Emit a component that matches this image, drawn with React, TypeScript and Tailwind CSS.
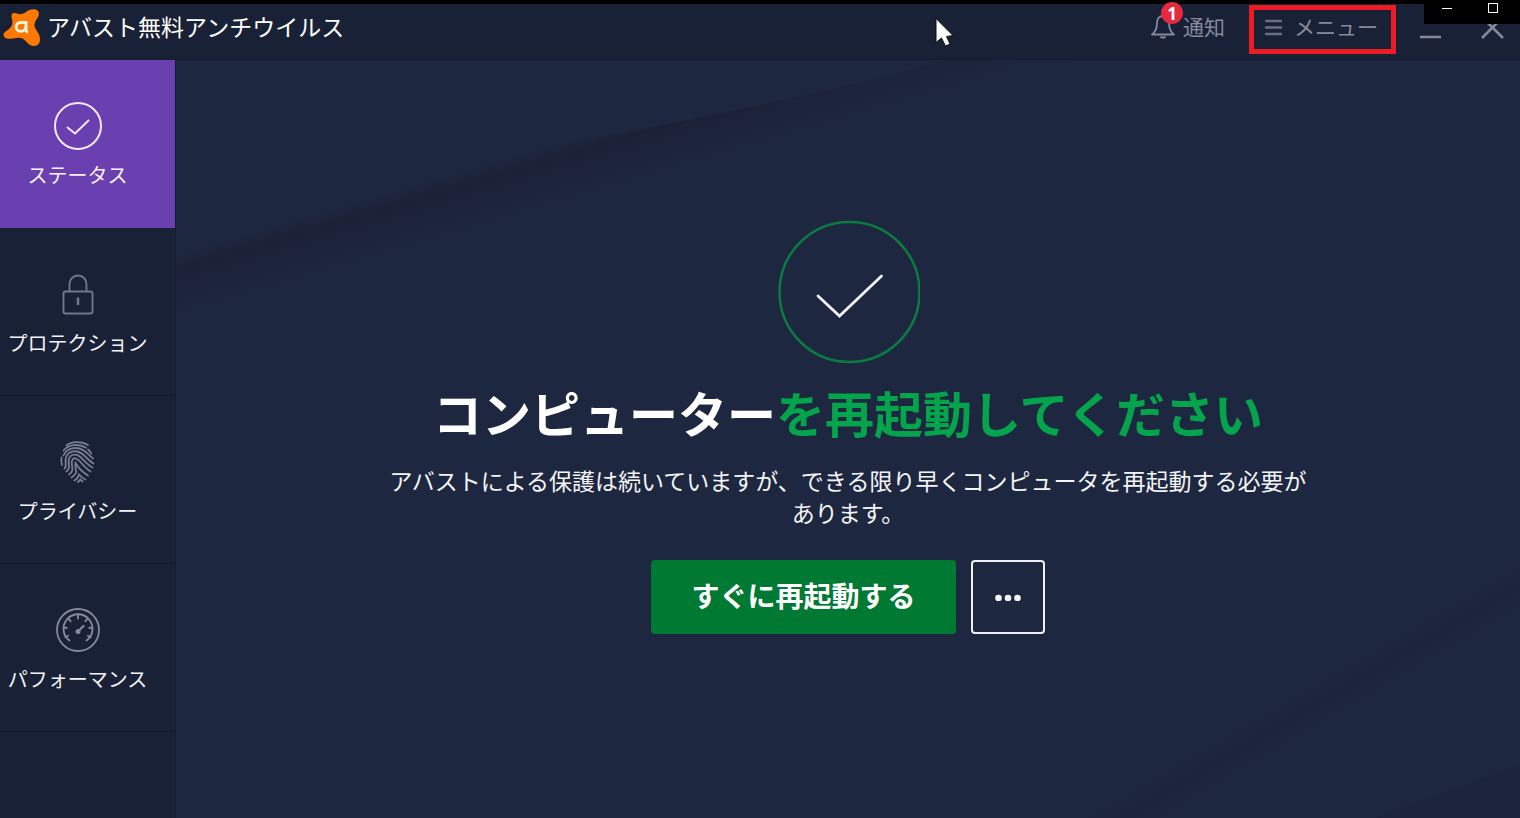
import type { ReactNode } from "react";

function AvastLogo() {
  return (
    <svg width="40" height="40" viewBox="0 0 40 40" aria-hidden="true">
      <path
        d="M9 6C10 4.500 12 4.800 14 5.500C17.500 6.800 20 6 23 4C25.500 2 28 1 31.500 1.200C35 1.500 36.800 4.500 35.500 8C34.500 10.500 32 13 31.500 16C31 19.500 33.500 22 35.500 25.500C37 28.500 37.500 32 36.500 34.500C35 38 31 38.500 28 37.500C24.500 36 23 32.500 19.500 30.500C15.500 28.500 10.500 31 5.500 30.800C2.500 30.600 0.500 29 0.500 27C0.500 24.500 3.500 23 6 21C9 18.500 10 15.500 9.200 12C8.700 9.500 8 7.500 9 6Z"
        fill="#ff7800"
      />
      <g fill="none" stroke="#fff4e4" strokeWidth="2.800" strokeLinecap="round" strokeLinejoin="round">
        <path d="M23 14.500H17.500A4.400 4.400 0 0 0 17.500 23.300C20.500 23.300 22.800 21.500 23 18.500" />
        <path d="M23 14.500V20.500C23 22.500 23.300 23.300 24 23.800" />
      </g>
    </svg>
  );
}

function BellIcon() {
  return (
    <svg width="24" height="26" viewBox="0 0 24 26" fill="none" stroke="#858a9c" strokeWidth="1.800" strokeLinejoin="round" aria-hidden="true">
      <path d="M12 3C8 3 6 6 6 10C6 15 5 18.500 1 21.500H23C19 18.500 18 15 18 10C18 6 16 3 12 3Z" />
      <path d="M9.500 23.500C10.500 25 13.500 25 14.500 23.500" strokeWidth="2" />
    </svg>
  );
}

function StatusIcon() {
  return (
    <svg width="48" height="48" viewBox="0 0 48 48" fill="none" stroke="#f4e9ff" strokeWidth="2" strokeLinecap="round" aria-hidden="true">
      <circle cx="24" cy="24" r="23" />
      <path d="M13.500 25.500L21 31.500L34.500 18.500" />
    </svg>
  );
}

function LockIcon() {
  return (
    <svg width="48" height="48" viewBox="0 0 48 48" fill="none" stroke="#73798d" strokeWidth="1.800" aria-hidden="true">
      <rect x="9.500" y="21.500" width="29" height="22" rx="2" />
      <path d="M15.500 21V14A8.500 8.500 0 0 1 32.500 14V21" />
      <path d="M24 27.500V35" strokeWidth="2.500" />
    </svg>
  );
}

function FingerprintIcon() {
  return (
    <svg width="48" height="48" viewBox="0 0 48 48" fill="none" stroke="#777d94" strokeWidth="1.800" strokeLinecap="round" aria-hidden="true">
      <path d="M12.500 7.500C17.500 3.300 27.500 2.800 34 7" />
      <path d="M9.500 12.500C14.500 6.500 25 5.200 32 9.800" />
      <path d="M34 11.500C35.500 12.800 36.500 14 37.200 15.500" />
      <path d="M7.500 19.500C7 22 7 24.500 8 27" />
      <path d="M9.500 17.500C12.500 10 23 7.500 30.500 13C34.500 16 37.500 19.500 39 20.500" />
      <path d="M10.500 30.500C13.500 28 10.500 23.500 12 19.500C14.500 12.500 23 11.500 28.500 16C32.500 19.500 36 23.500 39.500 25.500" />
      <path d="M12.500 33.500C17.500 30.500 13.500 25 15 20.800C17 15.500 23 15.500 27 19.500C30.500 23 34.500 27.500 38.500 29.500" />
      <path d="M15 36.500C21.500 32.500 16.500 27 18 22.500C19.500 19 23 20 25.500 23C29 27 32.500 31 36.500 33.500" />
      <path d="M17.500 39.500C19.500 38 21.500 36.500 22 34.500C22.500 31.500 20.500 28 21.500 25C25 31 29 34.500 34 37.500" />
      <path d="M20.500 42.500C23 41 24.500 39 25 36.500C27 39 29 40.500 31.500 41.500" />
      <path d="M24 44L26.500 41.500L28.500 43.500" />
    </svg>
  );
}

function GaugeIcon() {
  const ticks = [-120, -80, -40, 0, 40, 80, 120];
  return (
    <svg width="48" height="48" viewBox="0 0 48 48" fill="none" stroke="#858a9f" strokeWidth="1.800" strokeLinecap="round" aria-hidden="true">
      <circle cx="24" cy="24" r="21" />
      <path d="M15.500 34.500A14.500 14.500 0 1 1 32.500 34.500" />
      {ticks.map((t) => (
        <path key={t} d="M24 9.500V12.500" transform={`rotate(${t} 24 24)`} />
      ))}
      <path d="M24.500 25L29.500 20" strokeWidth="2.200" />
      <circle cx="24" cy="25.500" r="1.600" fill="#858a9f" />
    </svg>
  );
}

function NavItem({ label, icon, active }: { label: string; icon: ReactNode; active?: boolean }) {
  return (
    <li>
      <button
        type="button"
        aria-current={active ? "page" : undefined}
        className={`flex h-[168px] w-full flex-col items-center border-b pt-[42px] pr-5 text-[20px] leading-[34px] whitespace-nowrap ${
          active ? "border-[#6a3fb0] bg-[#6a3fb0] text-[#fbf3ff]" : "border-[#141c2e] text-[#f2f3f6]"
        }`}
      >
        <span className="mb-2 flex h-12 w-12 items-center justify-center">{icon}</span>
        {label}
      </button>
    </li>
  );
}

function Backdrop() {
  return (
    <svg className="absolute inset-0 h-full w-full" viewBox="0 0 1344 758" preserveAspectRatio="none" aria-hidden="true">
      <defs>
        <linearGradient id="fold" gradientUnits="userSpaceOnUse" x1="390" y1="80" x2="412" y2="155">
          <stop offset="0" stopColor="#1a2035" stopOpacity="0" />
          <stop offset="0.200" stopColor="#1a2035" stopOpacity="0.900" />
          <stop offset="0.450" stopColor="#1b2239" stopOpacity="0.550" />
          <stop offset="1" stopColor="#1e2740" stopOpacity="0" />
        </linearGradient>
        <linearGradient id="corner" gradientUnits="userSpaceOnUse" x1="1180" y1="590" x2="1215" y2="650">
          <stop offset="0" stopColor="#1b2239" stopOpacity="0" />
          <stop offset="0.400" stopColor="#1b2239" stopOpacity="0.400" />
          <stop offset="1" stopColor="#1e2740" stopOpacity="0" />
        </linearGradient>
      </defs>
      <path d="M0 165C220 105 520 70 770 0H980C800 75 420 130 0 270Z" fill="url(#fold)" />
      <path d="M880 758C1010 660 1160 570 1344 490V610C1220 650 1120 700 1060 758Z" fill="url(#corner)" />
      <path d="M1200 758C1250 738 1300 722 1344 705V758Z" fill="#1b2239" fillOpacity="0.500" />
    </svg>
  );
}

function Header() {
  return (
    <header className="flex h-[60px] items-start justify-between border-t-4 border-b border-t-black border-b-[#141c2e] bg-[#192136]">
      <div className="flex items-center gap-1 pt-1 pl-[3px]">
        <AvastLogo />
        <h1 className="pb-1 text-[23px] leading-8 text-white">アバスト無料アンチウイルス</h1>
      </div>
      <div className="flex items-start text-[21px] leading-8 text-[#858a9c]">
        <button type="button" className="relative mt-[6px] mr-6 flex items-center gap-2">
          <BellIcon />
          <span>通知</span>
          <span className="absolute -top-2 left-[10px] flex h-[22px] w-[22px] items-center justify-center rounded-full bg-[#e5293e] font-[Noto_Sans] text-[17px] leading-none font-bold text-white">
            1
          </span>
        </button>
        <button type="button" className="mt-[1px] flex h-[49px] w-[147px] items-center gap-3 border-[5px] border-[#ed1c24] pb-2 pl-[11px]">
          <svg className="mt-1" width="17" height="17" viewBox="0 0 17 17" stroke="#686e83" strokeWidth="2.500" aria-hidden="true">
            <path d="M0 2H17M0 8.500H17M0 15H17" />
          </svg>
          <span>メニュー</span>
        </button>
        <div className="flex items-start gap-10 pt-[10px] pr-4 pl-6">
          <button type="button" aria-label="最小化">
            <svg width="21" height="26" viewBox="0 0 21 26" stroke="#858a9c" strokeWidth="2.500">
              <path d="M0 23H21" />
            </svg>
          </button>
          <button type="button" aria-label="閉じる">
            <svg width="23" height="26" viewBox="0 0 23 26" stroke="#858a9c" strokeWidth="2.500">
              <path d="M1 3L22 24M22 3L1 24" />
            </svg>
          </button>
        </div>
      </div>
    </header>
  );
}

export default function App() {
  return (
    <div
      lang="ja"
      className="relative flex min-h-screen flex-col bg-[#1e2740] font-['Noto_Sans_CJK_JP',sans-serif]"
    >
      <Header />

      <div className="absolute top-0 right-0 flex h-6 w-24 justify-end bg-black" aria-hidden="true">
        <svg width="96" height="24" viewBox="0 0 96 24" fill="none" stroke="#fff" strokeWidth="1" shapeRendering="crispEdges">
          <path d="M18 8.500H28" />
          <rect x="64.500" y="3.500" width="9" height="9" />
        </svg>
      </div>

      <div className="flex flex-1">
        <nav className="w-[176px] shrink-0 border-r border-[#151d30] bg-[#192136]">
          <ul>
            <NavItem active label="ステータス" icon={<StatusIcon />} />
            <NavItem label="プロテクション" icon={<LockIcon />} />
            <NavItem label="プライバシー" icon={<FingerprintIcon />} />
            <NavItem label="パフォーマンス" icon={<GaugeIcon />} />
          </ul>
        </nav>

        <main className="relative flex flex-1 flex-col overflow-hidden">
          <Backdrop />
          <section className="relative flex flex-1 flex-col items-center justify-center px-6 pb-6 text-center">
            <svg width="144" height="144" viewBox="0 0 144 144" fill="none" aria-hidden="true">
              <circle cx="73.500" cy="72" r="70" stroke="#0b7b42" strokeWidth="2.500" />
              <path d="M42 76L63.500 96L105.500 56" stroke="#f0f1fa" strokeWidth="2.800" strokeLinecap="round" />
            </svg>
            <h2 className="mt-4 text-[49px] leading-[64px] font-bold text-white">
              コンピューター<span className="text-[#04a44c]">を再起動してください</span>
            </h2>
            <p className="mt-5 max-w-[930px] text-[23px] leading-8 text-[#f4f5f8]">
              アバストによる保護は続いていますが、できる限り早くコンピュータを再起動する必要があります。
            </p>
            <div className="mt-8 flex items-center gap-[15px]">
              <button type="button" className="h-[74px] rounded bg-[#007a33] px-10 pb-1 text-[28px] leading-10 font-bold text-white">
                すぐに再起動する
              </button>
              <button
                type="button"
                aria-label="その他のオプション"
                className="flex h-[74px] w-[74px] items-center justify-center rounded border-2 border-[#eef0f6]"
              >
                <svg width="26" height="8" viewBox="0 0 26 8" fill="#f4f5f8">
                  <circle cx="3.500" cy="5" r="3.300" />
                  <circle cx="13" cy="5" r="3.300" />
                  <circle cx="22.500" cy="5" r="3.300" />
                </svg>
              </button>
            </div>
          </section>
        </main>
      </div>

      <svg className="pointer-events-none absolute top-[17px] left-[935px]" width="20" height="30" viewBox="0 0 20 30" aria-hidden="true">
        <path d="M1 1.500V25.500L6.500 21L10.500 29L15 27L11.500 19.500L18 18.500Z" fill="#fff" stroke="#111" strokeWidth="1" />
      </svg>
    </div>
  );
}
